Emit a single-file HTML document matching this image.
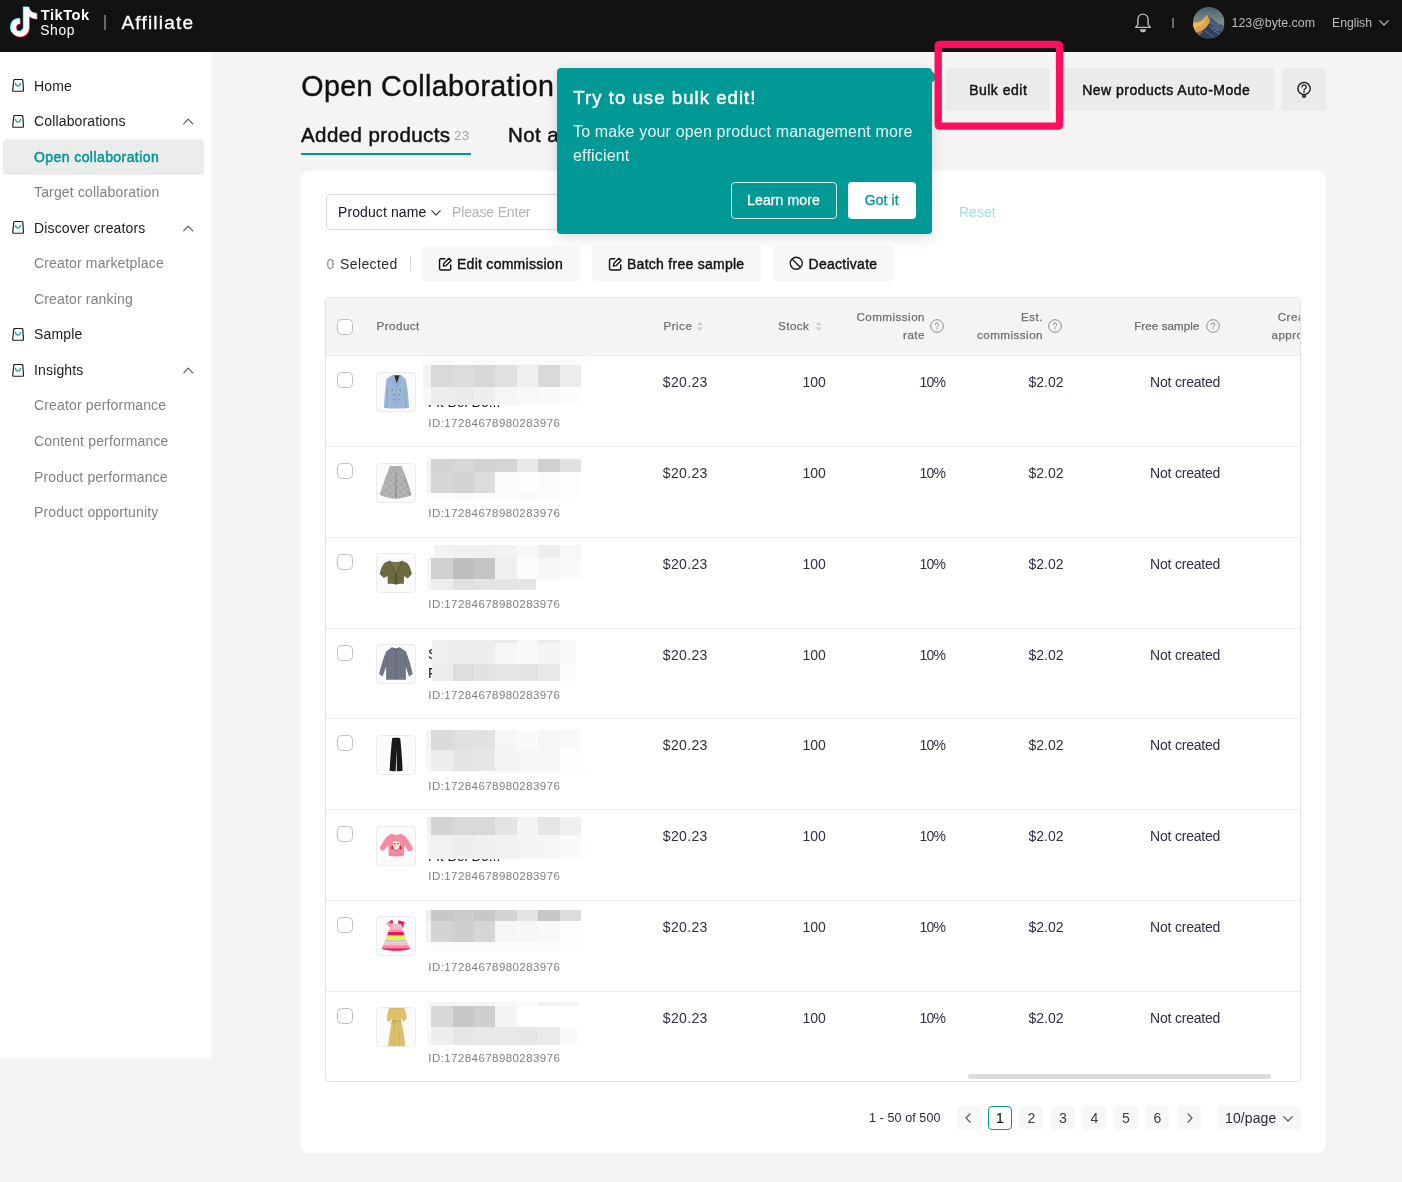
<!DOCTYPE html>
<html lang="en">
<head>
<meta charset="utf-8">
<title>Open Collaboration</title>
<style>
*{box-sizing:border-box;margin:0;padding:0}
html,body{width:1402px;height:1182px;overflow:hidden;background:#f4f4f4;font-family:"Liberation Sans",sans-serif;color:#161823}
svg{display:block;overflow:visible}
body{will-change:transform}
#hdr{position:absolute;left:0;top:0;width:1402px;height:51.700px;background:#121212}
#side{position:absolute;left:0;top:52px;width:211px;height:1006px;background:#fff;box-shadow:1px 0 0 #fafafa,0 1px 0 #f8f8f8}
.nav{position:absolute;left:34px;font-size:14px;line-height:20px;color:#1b1b20;white-space:nowrap;letter-spacing:0.150px}
.nav.sub{color:#828286;letter-spacing:0.160px}
.nav.act{color:#009995;letter-spacing:0.420px;-webkit-text-stroke:0.500px #009995}
.nico{position:absolute;left:12px;width:13px;height:13px}
.chev{position:absolute;left:182.700px;width:10.500px;height:6.600px}
#navact{position:absolute;left:3px;top:139px;width:201px;height:35.5px;background:#ececec;border-radius:4px}
h1{position:absolute;left:301.300px;top:68px;font-size:28.6px;line-height:36px;font-weight:normal;color:#121212;white-space:nowrap;letter-spacing:0.360px;-webkit-text-stroke:0.420px #121212}
.tab{position:absolute;top:122px;font-size:20.5px;line-height:26px;color:#121212;white-space:nowrap;-webkit-text-stroke:0.480px #121212;letter-spacing:0.420px}
#card{position:absolute;left:301.300px;top:170.800px;width:1024.700px;height:982.200px;background:#fff;border-radius:8px}
.btn{position:absolute;top:68px;height:42.700px;background:#ebebeb;border-radius:4px;font-size:14px;line-height:44px;color:#121212;text-align:center;white-space:nowrap;-webkit-text-stroke:0.450px #121212;letter-spacing:0.500px;padding-left:0.500px}
.abtn{position:absolute;top:246px;height:35px;background:#f7f7f7;border-radius:4px;font-size:14px;line-height:37px;color:#121212;white-space:nowrap;-webkit-text-stroke:0.420px #121212;letter-spacing:0.270px}
.abtn svg{position:absolute;top:10.600px;width:14.500px;height:14.500px}
#tbl{position:absolute;left:325px;top:297px;width:976px;height:785px;border:1px solid #e3e3e3;border-radius:4px;overflow:hidden;background:#fff}
#thead{position:absolute;left:0;top:0;width:976px;height:58.300px;background:#f4f4f4;border-bottom:1px solid #ececec}
.th{position:absolute;font-size:11.600px;line-height:17.600px;color:#6e6e72;white-space:nowrap;-webkit-text-stroke:0.250px #6e6e72;letter-spacing:0.480px}
.q{position:absolute;width:14px;height:14px}
.sort{position:absolute;width:7.600px;height:10.600px}
.row{position:absolute;left:0;width:974px;height:91.750px;border-bottom:1px solid #ececec}
.cb{position:absolute;left:10.500px;width:16px;height:16px;border:1px solid #c0c0c3;border-radius:4.500px;background:#fff}
.thumb{position:absolute;left:50.200px;top:16.500px;width:39.800px;height:40px;border:1px solid #ebebeb;border-radius:4px;background:#fbfbfb;overflow:hidden}
.thumb svg{position:absolute;left:-1px;top:-1px;width:40px;height:40px}
.pid{position:absolute;left:102.300px;top:59.300px;font-size:11.500px;line-height:16px;color:#7f8085;white-space:nowrap;letter-spacing:0.430px}
.cell{position:absolute;top:17px;font-size:14px;line-height:20px;color:#2f3040;white-space:nowrap}
.mz{position:absolute}
.pg{position:absolute;top:1106px;width:24px;height:24px;border-radius:4px;background:#f7f7f7;font-size:14px;line-height:24px;text-align:center;color:#3c3d45}
.peek{position:absolute;font-size:14px;line-height:19.300px;color:#161823;white-space:nowrap}
#tip{position:absolute;left:557px;top:68px;width:375px;height:166px;background:#009995;border-radius:4px;box-shadow:0 4px 14px rgba(0,0,0,0.130)}

</style>
</head>
<body>
<div id="hdr"></div>
<svg style="position:absolute;left:0;top:0;width:40px;height:40px" viewBox="0 0 40 40">
<path d="M25.60 6.40V26.90a6.5 6.5 0 1 1-6.5-6.5" fill="none" stroke="#25f4ee" stroke-width="5.500"/><path d="M28.35 6.40c0.300 3.600 3.200 6 7.700 6.300v5.700c-3 0-5.600-0.900-7.700-2.500z" fill="#25f4ee"/>
<path d="M27.10 7.60V28.10a6.5 6.5 0 1 1-6.5-6.5" fill="none" stroke="#fe2c55" stroke-width="5.500"/><path d="M29.85 7.60c0.300 3.600 3.200 6 7.700 6.300v5.700c-3 0-5.600-0.900-7.700-2.500z" fill="#fe2c55"/>
<path d="M26.35 7.00V27.50a6.5 6.5 0 1 1-6.5-6.5" fill="none" stroke="#fff" stroke-width="5.500"/><path d="M29.10 7.00c0.300 3.600 3.200 6 7.700 6.300v5.700c-3 0-5.600-0.900-7.700-2.500z" fill="#fff"/>
</svg>
<div style="position:absolute;left:40.800px;top:6.400px;font-size:14.700px;line-height:18px;font-weight:bold;color:#fff;letter-spacing:0.480px;white-space:nowrap" id="tiktok">TikTok</div>
<div style="position:absolute;left:40.300px;top:20.600px;font-size:13.900px;line-height:18px;color:#fff;letter-spacing:0.550px;white-space:nowrap" id="shop">Shop</div>
<div style="position:absolute;left:104.200px;top:15px;width:1.500px;height:15.200px;background:#696969"></div>
<div style="position:absolute;left:121.400px;top:10.700px;font-size:19px;line-height:24px;color:#fff;letter-spacing:1.200px;white-space:nowrap;-webkit-text-stroke:0.300px #fff" id="aff">Affiliate</div>
<svg style="position:absolute;left:1133px;top:12px;width:20px;height:22px" viewBox="0 0 20 22"><path d="M10 2.100c-3 0-5.100 2.300-5.100 5.200v5.300L2.600 15.400h14.800l-2.300-2.800V7.300c0-2.900-2.100-5.200-5.100-5.200z" fill="none" stroke="#bdbdbd" stroke-width="1.400" stroke-linejoin="round"/><path d="M6.900 17.200h6.200a3.100 3.100 0 0 1-6.200 0z" fill="#bdbdbd"/></svg>
<div style="position:absolute;left:1172px;top:17.500px;width:1.500px;height:10.500px;background:#6a6a6a"></div>
<svg style="position:absolute;left:1192.500px;top:6.900px;width:31.500px;height:31.500px" viewBox="0 0 32 32"><defs><clipPath id="av"><circle cx="16" cy="16" r="16"/></clipPath><linearGradient id="sky" x1="0" y1="0" x2="0" y2="1"><stop offset="0" stop-color="#48626f"/><stop offset="0.550" stop-color="#87938c"/><stop offset="1" stop-color="#87938c"/></linearGradient></defs><g clip-path="url(#av)"><rect width="32" height="32" fill="url(#sky)"/>
<path d="M14.100 7.800L16 9.500L17.500 10.800L19.800 11.200L21.500 13.500L23.500 15L25.300 16.400L26.500 15.600L28 17L30 18L32 19.500V32H8z" fill="#4b5c76"/>
<path d="M14.100 7.800L12.800 10L11 12L9 14L7 14.800L5 16L3 15.600L1.500 15.400L0 17V26L3 27L6 25.500L9 24.500L12 22L14.500 19.500L16.500 16.500L17.200 13.500L16 11z" fill="#e3a04a"/>
<path d="M14.100 7.800L13.500 11L12 14.500L10 17L7.500 18.500L5 19L3 21L0 22V17L1.500 15.400L3 15.600L5 16L7 14.800L9 14L11 12L12.800 10z" fill="#f0b45a"/>
<path d="M26.500 15.600L27.200 17.200L25.800 17.400z" fill="#e3a04a"/>
<path d="M0 26L3 27L6 25.500L9 24.500L12 22L14.500 19.500L16.500 16.500L18 18L20 19L22 21.500L25 23L28 25L32 26V32H0z" fill="#2f405c"/>
<path d="M0 26L3 27L6 25.500L9 24.500L10 26L7 28L4 30L0 31z" fill="#8a6a4a"/>
<path d="M17 19L19 22L22 24.500L25 26.500L28 28M20 20.500L23 22.500L26 24.500" stroke="#7f8ea6" stroke-width="0.900" fill="none"/>
<path d="M12 24L15 26L18 28.500L21 30.500" stroke="#5f7090" stroke-width="1" fill="none"/>
</g></svg>
<div style="position:absolute;left:1231.500px;top:14.800px;font-size:12.400px;line-height:16px;color:#bcbcbc;white-space:nowrap" id="email">123@byte.com</div>
<div style="position:absolute;left:1332px;top:14.800px;font-size:12.200px;line-height:16px;color:#bcbcbc;white-space:nowrap" id="lang">English</div>
<svg style="position:absolute;left:1379px;top:19.500px;width:10px;height:6px" viewBox="0 0 10 6"><path d="M0.700 0.700L5 5L9.300 0.700" fill="none" stroke="#b4b4b4" stroke-width="1.200" stroke-linecap="round" stroke-linejoin="round"/></svg>
<div id="side"></div>
<div id="navact"></div>
<svg class="nico" style="top:79.20px" viewBox="0 0 13 13"><path d="M2.700 0.500H9.900a0.900 0.900 0 0 1 0.900 0.850L11.500 11.300a0.900 0.900 0 0 1-0.900 0.950H1.600a0.900 0.900 0 0 1-0.900-0.950L1.800 1.350a0.900 0.900 0 0 1 0.900-0.850z" fill="none" stroke="#1d1e26" stroke-width="1.200" stroke-linejoin="round"/><path d="M3.500 4.300C3.700 6.300 4.800 7.150 6 7.150S8.300 6.300 8.500 4.300" fill="none" stroke="#14a09b" stroke-width="1.300" stroke-linecap="round"/></svg>
<div class="nav" style="top:75.50px">Home</div>
<svg class="nico" style="top:114.75px" viewBox="0 0 13 13"><path d="M2.700 0.500H9.900a0.900 0.900 0 0 1 0.900 0.850L11.500 11.300a0.900 0.900 0 0 1-0.900 0.950H1.600a0.900 0.900 0 0 1-0.900-0.950L1.800 1.350a0.900 0.900 0 0 1 0.900-0.850z" fill="none" stroke="#1d1e26" stroke-width="1.200" stroke-linejoin="round"/><path d="M3.500 4.300C3.700 6.300 4.800 7.150 6 7.150S8.300 6.300 8.500 4.300" fill="none" stroke="#14a09b" stroke-width="1.300" stroke-linecap="round"/></svg>
<svg class="chev" style="top:117.85px" viewBox="0 0 11 7"><path d="M0.7 6.2L5.5 1.2L10.3 6.2" fill="none" stroke="#55565c" stroke-width="1.2" stroke-linecap="round" stroke-linejoin="round"/></svg>
<div class="nav" style="top:111.05px">Collaborations</div>
<div class="nav act" style="top:146.60px">Open collaboration</div>
<div class="nav sub" style="top:182.15px">Target collaboration</div>
<svg class="nico" style="top:221.40px" viewBox="0 0 13 13"><path d="M2.700 0.500H9.900a0.900 0.900 0 0 1 0.900 0.850L11.500 11.300a0.900 0.900 0 0 1-0.900 0.950H1.600a0.900 0.900 0 0 1-0.900-0.950L1.800 1.350a0.900 0.900 0 0 1 0.900-0.850z" fill="none" stroke="#1d1e26" stroke-width="1.200" stroke-linejoin="round"/><path d="M3.500 4.300C3.700 6.300 4.800 7.150 6 7.150S8.300 6.300 8.500 4.300" fill="none" stroke="#14a09b" stroke-width="1.300" stroke-linecap="round"/></svg>
<svg class="chev" style="top:224.50px" viewBox="0 0 11 7"><path d="M0.7 6.2L5.5 1.2L10.3 6.2" fill="none" stroke="#55565c" stroke-width="1.2" stroke-linecap="round" stroke-linejoin="round"/></svg>
<div class="nav" style="top:217.70px">Discover creators</div>
<div class="nav sub" style="top:253.25px">Creator marketplace</div>
<div class="nav sub" style="top:288.80px">Creator ranking</div>
<svg class="nico" style="top:328.05px" viewBox="0 0 13 13"><path d="M2.700 0.500H9.900a0.900 0.900 0 0 1 0.900 0.850L11.500 11.300a0.900 0.900 0 0 1-0.900 0.950H1.600a0.900 0.900 0 0 1-0.900-0.950L1.800 1.350a0.900 0.900 0 0 1 0.900-0.850z" fill="none" stroke="#1d1e26" stroke-width="1.200" stroke-linejoin="round"/><path d="M3.500 4.300C3.700 6.300 4.800 7.150 6 7.150S8.300 6.300 8.500 4.300" fill="none" stroke="#14a09b" stroke-width="1.300" stroke-linecap="round"/></svg>
<div class="nav" style="top:324.35px">Sample</div>
<svg class="nico" style="top:363.60px" viewBox="0 0 13 13"><path d="M2.700 0.500H9.900a0.900 0.900 0 0 1 0.900 0.850L11.500 11.300a0.900 0.900 0 0 1-0.900 0.950H1.600a0.900 0.900 0 0 1-0.900-0.950L1.800 1.350a0.900 0.900 0 0 1 0.900-0.850z" fill="none" stroke="#1d1e26" stroke-width="1.200" stroke-linejoin="round"/><path d="M3.500 4.300C3.700 6.300 4.800 7.150 6 7.150S8.300 6.300 8.500 4.300" fill="none" stroke="#14a09b" stroke-width="1.300" stroke-linecap="round"/></svg>
<svg class="chev" style="top:366.70px" viewBox="0 0 11 7"><path d="M0.7 6.2L5.5 1.2L10.3 6.2" fill="none" stroke="#55565c" stroke-width="1.2" stroke-linecap="round" stroke-linejoin="round"/></svg>
<div class="nav" style="top:359.90px">Insights</div>
<div class="nav sub" style="top:395.45px">Creator performance</div>
<div class="nav sub" style="top:431.00px">Content performance</div>
<div class="nav sub" style="top:466.55px">Product performance</div>
<div class="nav sub" style="top:502.10px">Product opportunity</div>
<h1 id="h1">Open Collaboration</h1>
<div class="tab" style="left:301px" id="tab1">Added products<span style="font-size:13.500px;color:#a4a5a9;-webkit-text-stroke:0;margin-left:3.500px;letter-spacing:0.300px;position:relative;top:-2.300px">23</span></div>
<div style="position:absolute;left:301px;top:152.500px;width:170px;height:2.500px;background:#009995"></div>
<div class="tab" style="left:508px" id="tab2">Not added products</div>
<div class="btn" style="left:945.700px;width:104.600px" id="bulk">Bulk edit</div>
<div class="btn" style="left:1058px;width:216px" id="npam">New products Auto-Mode</div>
<div class="btn" style="left:1282px;width:44px"></div>
<svg style="position:absolute;left:1294px;top:78px;width:20px;height:20px" viewBox="0 0 20 20"><circle cx="10.050" cy="10.500" r="6.150" fill="none" stroke="#1a1a1a" stroke-width="1.400"/><path d="M7.950 8.900a2.150 2.050 0 1 1 3.200 1.800c-0.800 0.420-1.080 0.800-1.080 1.400" fill="none" stroke="#1a1a1a" stroke-width="1.250" stroke-linecap="round"/><circle cx="10.050" cy="13.900" r="0.850" fill="#1a1a1a"/><path d="M7.300 15.800L8.100 17.200V19.800H12.050V17.200L12.800 15.800L10.050 17.300z" fill="#3c3c3c"/></svg>
<div id="card"></div>
<div style="position:absolute;left:326px;top:194px;width:400px;height:36px;border:1px solid #dcdcdc;border-radius:4px;background:#fff"></div>
<div style="position:absolute;left:338px;top:202px;font-size:14px;line-height:20px;color:#161823;white-space:nowrap;letter-spacing:0.1px" id="pname">Product name</div>
<svg style="position:absolute;left:431px;top:209.500px;width:10px;height:6px" viewBox="0 0 10 6"><path d="M0.700 0.700L5 5L9.300 0.700" fill="none" stroke="#444" stroke-width="1.200" stroke-linecap="round" stroke-linejoin="round"/></svg>
<div style="position:absolute;left:452px;top:202px;font-size:14px;line-height:20px;color:#b2b3b7;white-space:nowrap;letter-spacing:-0.150px" id="pe">Please Enter</div>
<div style="position:absolute;left:738px;top:194px;width:76px;height:36px;border-radius:4px;background:#009995;color:#fff;font-size:14px;line-height:36px;text-align:center" id="search">Search</div>
<div style="position:absolute;left:959px;top:202px;font-size:14px;line-height:20px;color:#a6dedd;white-space:nowrap" id="reset">Reset</div>
<div style="position:absolute;left:326.600px;top:253.500px;font-size:14px;line-height:20px;color:#8a8b91;white-space:nowrap">0</div>
<div style="position:absolute;left:340px;top:253.500px;font-size:14px;line-height:20px;color:#2a2b36;white-space:nowrap;letter-spacing:0.400px" id="sel">Selected</div>
<div style="position:absolute;left:409.500px;top:256px;width:1.500px;height:15px;background:#d8d8d8"></div>
<div class="abtn" style="left:422px;width:157.500px;padding-left:35px" id="ab1"><svg style="left:16.2px" viewBox="0 0 14 14"><path d="M6.500 1.700H3a1.500 1.500 0 0 0-1.500 1.500v7.800A1.500 1.500 0 0 0 3 12.500h7.800a1.500 1.500 0 0 0 1.500-1.500V7.800" fill="none" stroke="#121212" stroke-width="1.400" stroke-linecap="round"/><path d="M10.600 1.300l2.100 2.100-5 5-2.500 0.400 0.400-2.500z" fill="none" stroke="#121212" stroke-width="1.300" stroke-linejoin="round"/></svg>Edit commission</div>
<div class="abtn" style="left:592px;width:168.500px;padding-left:35px" id="ab2"><svg style="left:16.2px" viewBox="0 0 14 14"><path d="M6.500 1.700H3a1.500 1.500 0 0 0-1.500 1.500v7.800A1.500 1.500 0 0 0 3 12.500h7.800a1.500 1.500 0 0 0 1.500-1.500V7.800" fill="none" stroke="#121212" stroke-width="1.400" stroke-linecap="round"/><path d="M10.600 1.300l2.100 2.100-5 5-2.500 0.400 0.400-2.500z" fill="none" stroke="#121212" stroke-width="1.300" stroke-linejoin="round"/></svg>Batch free sample</div>
<div class="abtn" style="left:773px;width:121px;padding-left:35.500px" id="ab3"><svg style="left:16.300px;top:9.700px" viewBox="0 0 14 14"><circle cx="7" cy="7" r="5.800" fill="none" stroke="#121212" stroke-width="1.250"/><path d="M2.900 2.900L11.100 11.100" stroke="#121212" stroke-width="1.250"/></svg>Deactivate</div>
<div id="tbl">
<div id="thead"></div>
<div class="cb" style="top:20.69999999999999px"></div>
<div class="th" id="thp" style="left:50.5px;top:19.0px">Product</div>
<div class="th" id="thpr" style="left:337.5px;top:19.0px">Price</div>
<svg class="sort" style="left:369.79999999999995px;top:22.69999999999999px" viewBox="0 0 7 10"><path d="M3.500 0.500L6.300 4H0.700z" fill="#cfcfd1"/><path d="M3.500 9.500L6.300 6H0.700z" fill="#cfcfd1"/></svg>
<div class="th" id="thst" style="left:452px;top:19.0px">Stock</div>
<svg class="sort" style="left:488.5px;top:22.69999999999999px" viewBox="0 0 7 10"><path d="M3.500 0.500L6.300 4H0.700z" fill="#cfcfd1"/><path d="M3.500 9.500L6.300 6H0.700z" fill="#cfcfd1"/></svg>
<div class="th" id="thc" style="right:375px;text-align:right;top:10.399999999999977px">Commission<br>rate</div>
<svg class="q" style="left:604px;top:21.100000000000023px" viewBox="0 0 14 14"><circle cx="7" cy="7" r="6.300" fill="none" stroke="#8c8d92" stroke-width="1"/><path d="M5.300 5.700a1.700 1.700 0 1 1 2.500 1.500c-0.600 0.300-0.800 0.600-0.800 1.100" fill="none" stroke="#8c8d92" stroke-width="1" stroke-linecap="round"/><circle cx="7" cy="10" r="0.650" fill="#8c8d92"/></svg>
<div class="th" id="the" style="right:257px;text-align:right;top:10.399999999999977px">Est.<br>commission</div>
<svg class="q" style="left:722px;top:21.100000000000023px" viewBox="0 0 14 14"><circle cx="7" cy="7" r="6.300" fill="none" stroke="#8c8d92" stroke-width="1"/><path d="M5.300 5.700a1.700 1.700 0 1 1 2.500 1.500c-0.600 0.300-0.800 0.600-0.800 1.100" fill="none" stroke="#8c8d92" stroke-width="1" stroke-linecap="round"/><circle cx="7" cy="10" r="0.650" fill="#8c8d92"/></svg>
<div class="th" id="thf" style="left:808.2px;top:19.0px"><span style="letter-spacing:0.080px">Free sample</span></div>
<svg class="q" style="left:880px;top:21.100000000000023px" viewBox="0 0 14 14"><circle cx="7" cy="7" r="6.300" fill="none" stroke="#8c8d92" stroke-width="1"/><path d="M5.300 5.700a1.700 1.700 0 1 1 2.500 1.500c-0.600 0.300-0.800 0.600-0.800 1.100" fill="none" stroke="#8c8d92" stroke-width="1" stroke-linecap="round"/><circle cx="7" cy="10" r="0.650" fill="#8c8d92"/></svg>
<div class="th" id="thcr" style="right:-19.799999999999955px;text-align:right;top:10.399999999999977px">Creator<br>approval</div>
<div class="row" style="top:57.30px">
<div class="cb" style="top:17.200px"></div>
<div class="thumb"><svg viewBox="0 0 40 40"><path d="M17.2 2.600L13.500 4.800L10.800 6.800C9.500 12 8.600 24 7.900 35.600L11.500 36L11.800 36.500H28.600L29 36L33 35.600C32.300 24 31.200 12 29.500 6.800L26.800 4.800L24.200 2.600L20.700 11.700z" fill="#9bb7d7"/><path d="M18 3.200L24 3.200L20.700 11.900z" fill="#2d3038"/><path d="M17.200 2.600L15.300 7.500L16.500 8.400L15.700 9.400L20.700 16.500L20.700 11.700zM24.200 2.600L25.800 7.500L24.600 8.400L25.400 9.400L20.700 16.500L20.700 11.700z" fill="#8fafd3"/><path d="M20.700 16.500L19.600 36.500" stroke="#86a6cb" stroke-width="0.800"/><path d="M11.700 14L11 36M29 14L29.700 36" stroke="#86a6cb" stroke-width="0.900" fill="none"/><g fill="#6d7078"><circle cx="16.300" cy="18" r="0.700"/><circle cx="24.200" cy="18" r="0.700"/><circle cx="17.800" cy="22.700" r="0.700"/><circle cx="22.900" cy="22.700" r="0.700"/><circle cx="17.800" cy="27.700" r="0.700"/><circle cx="22.900" cy="27.700" r="0.700"/></g><path d="M7.900 35L11.300 35.400V36.200L7.900 35.800zM33 35L29.600 35.400V36.200L33 35.800z" fill="#b89a80"/></svg></div>
<div class="pid">ID:17284678980283976</div>
<div class="cell" style="left:336.79999999999995px;letter-spacing:0.350px">$20.23</div>
<div class="cell" style="right:474.20000000000005px">100</div>
<div class="cell" style="right:354.70000000000005px;letter-spacing:-0.700px">10%</div>
<div class="cell" style="right:236.5px">$2.02</div>
<div class="cell" style="left:824px;letter-spacing:-0.2px">Not created</div>
</div>
<div class="row" style="top:148.05px">
<div class="cb" style="top:17.200px"></div>
<div class="thumb"><svg viewBox="0 0 40 40"><defs><pattern id="ck" width="1.600" height="1.600" patternUnits="userSpaceOnUse" patternTransform="rotate(35)"><rect width="1.600" height="1.600" fill="#bcbcbc"/><rect width="0.800" height="0.800" fill="#a4a4a4"/><rect x="0.800" y="0.800" width="0.800" height="0.800" fill="#a4a4a4"/></pattern></defs><path d="M13.900 3.300H25.500L27.300 8C31 17 33.500 25 35.600 31.700C33.500 33.300 31 34 28.500 34.300C26 35.300 22.500 35.800 19.600 35.600C16 35.800 13 35 10.500 34C8 33.500 5.500 32.800 3.700 31.700C6.500 23 9.500 14 12.300 7.500z" fill="url(#ck)"/><path d="M13.900 3.300H25.500L25.900 4.600H13.500z" fill="#a8a8a8"/><path d="M19.400 8.800L19 35.600L20.600 35.500L20.200 8.800z" fill="#8c8c8c"/><path d="M27.300 8C31 17 33.500 25 35.600 31.700L33 33C31 25 29.500 17 26.500 8z" fill="#a2a2a2" opacity="0.600"/></svg></div>
<div class="pid">ID:17284678980283976</div>
<div class="cell" style="left:336.79999999999995px;letter-spacing:0.350px">$20.23</div>
<div class="cell" style="right:474.20000000000005px">100</div>
<div class="cell" style="right:354.70000000000005px;letter-spacing:-0.700px">10%</div>
<div class="cell" style="right:236.5px">$2.02</div>
<div class="cell" style="left:824px;letter-spacing:-0.2px">Not created</div>
</div>
<div class="row" style="top:238.80px">
<div class="cb" style="top:17.200px"></div>
<div class="thumb"><svg viewBox="0 0 40 40"><path d="M13.200 7.700L8.400 10.100C6 12.500 4.500 17 3.700 21.100L7.900 25L11.400 22.900L11.900 31.200C15 30.600 17.500 30.800 19.800 31.600C22 30.800 25 30.600 27.700 31.200L28.200 22.900L31.700 25.500L35.900 21.100C35 17 33.500 12.500 31.200 10.100L26.200 7.700L19.800 21.100z" fill="#6c6b40"/><path d="M13.200 7.700L19.800 21.100L26.200 7.700C22 9.300 17.500 9.300 13.200 7.700z" fill="#77764a"/><path d="M13.200 7.700L19.800 21.100L26.200 7.700" stroke="#4e4d2a" stroke-width="0.900" fill="none"/><path d="M19.800 21.100L19.500 24L20.300 27L19.800 31.400" stroke="#45441f" stroke-width="1.100" fill="none"/><path d="M19.800 21.100L23 25.500M19.800 23L17 26" stroke="#55542c" stroke-width="0.700" fill="none"/></svg></div>
<div class="pid">ID:17284678980283976</div>
<div class="cell" style="left:336.79999999999995px;letter-spacing:0.350px">$20.23</div>
<div class="cell" style="right:474.20000000000005px">100</div>
<div class="cell" style="right:354.70000000000005px;letter-spacing:-0.700px">10%</div>
<div class="cell" style="right:236.5px">$2.02</div>
<div class="cell" style="left:824px;letter-spacing:-0.2px">Not created</div>
</div>
<div class="row" style="top:329.55px">
<div class="cb" style="top:17.200px"></div>
<div class="thumb"><svg viewBox="0 0 40 40"><defs><pattern id="sp" width="1.400" height="1.400" patternUnits="userSpaceOnUse"><rect width="1.400" height="1.400" fill="#7b808d"/><rect width="0.700" height="0.700" fill="#62677a"/><rect x="0.700" y="0.700" width="0.700" height="0.700" fill="#6a6f7e"/></pattern></defs><path d="M15.800 3.200L10.100 7.600C7.500 14 5 22 3.100 30L6.600 32.600L10.100 23V35.700H29.900V23L33 32.600L36.700 30C35 22 32.500 14 29.900 7.600L23.800 3.200L19.800 5z" fill="url(#sp)"/><path d="M15.800 3.200L19.800 7.500L23.800 3.200L19.800 4.700z" fill="#5a5f6d"/><path d="M19.800 7.500V35.700" stroke="#5e6373" stroke-width="0.700"/><path d="M10.100 23L11.300 12M29.900 23L28.700 12" stroke="#666b7a" stroke-width="0.600"/></svg></div>
<div class="pid">ID:17284678980283976</div>
<div class="cell" style="left:336.79999999999995px;letter-spacing:0.350px">$20.23</div>
<div class="cell" style="right:474.20000000000005px">100</div>
<div class="cell" style="right:354.70000000000005px;letter-spacing:-0.700px">10%</div>
<div class="cell" style="right:236.5px">$2.02</div>
<div class="cell" style="left:824px;letter-spacing:-0.2px">Not created</div>
</div>
<div class="row" style="top:420.30px">
<div class="cb" style="top:17.200px"></div>
<div class="thumb"><svg viewBox="0 0 40 40"><path d="M16.100 3.300C18.500 2.700 21.800 2.700 24.200 3.300C25.300 13 26.200 25 26.600 35.800C24.800 36.400 22.600 36.400 20.900 35.900L20.300 13.300L19.800 35.900C17.800 36.400 15.400 36.400 13.600 35.800C14.200 25 15 13 16.100 3.300z" fill="#191919"/></svg></div>
<div class="pid">ID:17284678980283976</div>
<div class="cell" style="left:336.79999999999995px;letter-spacing:0.350px">$20.23</div>
<div class="cell" style="right:474.20000000000005px">100</div>
<div class="cell" style="right:354.70000000000005px;letter-spacing:-0.700px">10%</div>
<div class="cell" style="right:236.5px">$2.02</div>
<div class="cell" style="left:824px;letter-spacing:-0.2px">Not created</div>
</div>
<div class="row" style="top:511.05px">
<div class="cb" style="top:17.200px"></div>
<div class="thumb"><svg viewBox="0 0 40 40"><path d="M15.800 7.700L12.300 9.500C8.500 13 5.500 18 3.700 22.200L5.700 24.400L7.500 24.800L12.300 19.600L12.800 29.700C17 30.600 23 30.600 27.700 29.700L28.600 19.600L32.300 25.300L34.300 25.300L37 23.100C35 18 32 13 28.200 9.500L24.600 7.700C22 9.300 18.500 9.300 15.800 7.700z" fill="#f18ca3"/><path d="M16.500 8.500C18.500 9.700 22 9.700 24 8.500" stroke="#f0a03a" stroke-width="0.600" fill="none"/><path d="M12.800 28.300C17 29.200 23 29.200 27.700 28.300" stroke="#ec7893" stroke-width="0.700" fill="none"/><ellipse cx="20.300" cy="19.300" rx="3.300" ry="4.100" fill="#f9c9d3"/><ellipse cx="18.700" cy="17.500" rx="1.800" ry="1.900" fill="#fff"/><ellipse cx="22" cy="17.500" rx="1.800" ry="1.900" fill="#fff"/><circle cx="18.900" cy="17.700" r="0.800" fill="#3a2a2a"/><circle cx="21.900" cy="17.700" r="0.800" fill="#3a2a2a"/><path d="M19.600 18.500h1.400l-0.700 1.300z" fill="#f5c400"/><ellipse cx="20.400" cy="21.800" rx="1.900" ry="1.400" fill="#fff"/><path d="M16.600 19.600C15 20.500 14.800 22.500 15.600 23.600L17.600 23.200zM24 19.600C25.600 20.500 25.900 22.500 25.300 23.600L23.300 23.200z" fill="#e01b22"/><path d="M17.200 13.200l0.600 1.300M23.300 13.200l-0.600 1.300" stroke="#f0a03a" stroke-width="0.600"/><path d="M19.200 24.200v0.900M21.500 24.200v0.900" stroke="#5a3a3a" stroke-width="0.600"/></svg></div>
<div class="pid">ID:17284678980283976</div>
<div class="cell" style="left:336.79999999999995px;letter-spacing:0.350px">$20.23</div>
<div class="cell" style="right:474.20000000000005px">100</div>
<div class="cell" style="right:354.70000000000005px;letter-spacing:-0.700px">10%</div>
<div class="cell" style="right:236.5px">$2.02</div>
<div class="cell" style="left:824px;letter-spacing:-0.2px">Not created</div>
</div>
<div class="row" style="top:601.80px">
<div class="cb" style="top:17.200px"></div>
<div class="thumb"><svg viewBox="0 0 40 40"><path d="M10.100 7.300L16.300 3.700L17.600 8.100L14.500 12.500z" fill="#f799b0"/><path d="M13 5.600L16.300 3.700L17.300 7L15 7.800z" fill="#ee2a63"/><path d="M22 4.200L28.600 5.900L26.400 12.100L25 8.100L22.300 8.100z" fill="#ee1a5a"/><path d="M15 8.100H25.100V10.300H15z" fill="#bcd0cc"/><path d="M15 10.300H25.100L26.400 13.400H13.200z" fill="#f9b3c4"/><path d="M13.200 13.400H26.400L27.300 16.100H12.300z" fill="#f68fa9"/><path d="M12.300 16.100H27.300L28.700 19.600H10.900z" fill="#ee1a55"/><path d="M10.900 19.600H28.700L30.200 23.500H9.400z" fill="#e6f254"/><path d="M9.400 23.500H30.200L31.300 26.200H8.300z" fill="#b9d5cd"/><path d="M8.300 26.200H31.300L32.600 29.300H7.100z" fill="#f9bccb"/><path d="M7.100 29.300H32.600L33.900 32.300H5.900z" fill="#f68aa6"/><path d="M5.900 32.300H33.900L34 33C28 35.400 12 35.400 5.800 33z" fill="#ee1a5a"/></svg></div>
<div class="pid">ID:17284678980283976</div>
<div class="cell" style="left:336.79999999999995px;letter-spacing:0.350px">$20.23</div>
<div class="cell" style="right:474.20000000000005px">100</div>
<div class="cell" style="right:354.70000000000005px;letter-spacing:-0.700px">10%</div>
<div class="cell" style="right:236.5px">$2.02</div>
<div class="cell" style="left:824px;letter-spacing:-0.2px">Not created</div>
</div>
<div class="row" style="top:692.55px">
<div class="cb" style="top:17.200px"></div>
<div class="thumb"><svg viewBox="0 0 40 40"><path d="M15.400 0L12.800 1.700C11.800 5 11.100 9.500 10.800 13.500L14.500 14.900L16 10.500L16.300 12.700C14.500 21 13 31 11.900 40H29.500C28.500 31 27 21 25.100 13.500L25.500 10.500L27.300 14.900L30.800 11.800C30.300 8 29.600 4.500 28.600 1.700L24.600 0C22 2.200 18 2.200 15.400 0z" fill="#dcc06a"/><path d="M15.400 0C18 2.600 22 2.600 24.600 0" stroke="#b59a4a" stroke-width="0.800" fill="none"/><path d="M16.300 12.700L25.100 13.500L25.300 15.200L16.100 14.600z" fill="#cfb057"/><path d="M18.400 13.500L19.600 13.600L19 22.800L18 22.600z" fill="#c9a94e"/><path d="M18.400 14L14.500 16.600L15.800 17.800L18.600 15.500z" fill="#d2b45c"/><path d="M18.500 22.800L17.800 40M22.500 15L23.500 40" stroke="#cdb05a" stroke-width="0.600" fill="none"/></svg></div>
<div class="pid">ID:17284678980283976</div>
<div class="cell" style="left:336.79999999999995px;letter-spacing:0.350px">$20.23</div>
<div class="cell" style="right:474.20000000000005px">100</div>
<div class="cell" style="right:354.70000000000005px;letter-spacing:-0.700px">10%</div>
<div class="cell" style="right:236.5px">$2.02</div>
<div class="cell" style="left:824px;letter-spacing:-0.2px">Not created</div>
</div>
<div class="peek" style="left:102px;top:95.10000000000002px">Fit Bel Bo...</div>
<div class="peek" style="left:102px;top:548.8px">Fit Bel Bo...</div>
<div class="peek" style="left:102px;top:346.5px">Slim<br>Fit</div>
<i class="mz" style="left:97.2px;top:61.3px;width:164.8px;height:5.6px;background:#fbfbfb"></i>
<i class="mz" style="left:97.2px;top:66.9px;width:7.7px;height:22.1px;background:#f3f3f3"></i>
<i class="mz" style="left:104.9px;top:66.9px;width:22.3px;height:22.1px;background:#d9d9d9"></i>
<i class="mz" style="left:127.2px;top:66.9px;width:20.5px;height:22.1px;background:#dcdcdc"></i>
<i class="mz" style="left:147.7px;top:66.9px;width:21.4px;height:22.1px;background:#d8d8d8"></i>
<i class="mz" style="left:169.1px;top:66.9px;width:21.9px;height:22.1px;background:#e0e0e0"></i>
<i class="mz" style="left:191.0px;top:66.9px;width:20.9px;height:22.1px;background:#f0f0f0"></i>
<i class="mz" style="left:211.9px;top:66.9px;width:21.9px;height:22.1px;background:#d9d9d9"></i>
<i class="mz" style="left:233.8px;top:66.9px;width:21.2px;height:22.1px;background:#ececec"></i>
<i class="mz" style="left:97.2px;top:89.0px;width:7.7px;height:17.8px;background:#f8f8f8"></i>
<i class="mz" style="left:104.9px;top:89.0px;width:22.3px;height:17.8px;background:#ececec"></i>
<i class="mz" style="left:127.2px;top:89.0px;width:20.5px;height:17.8px;background:#eaeaea"></i>
<i class="mz" style="left:147.7px;top:89.0px;width:21.4px;height:17.8px;background:#eeeeee"></i>
<i class="mz" style="left:169.1px;top:89.0px;width:21.9px;height:17.8px;background:#f6f6f6"></i>
<i class="mz" style="left:191.0px;top:89.0px;width:20.9px;height:17.8px;background:#f9f9f9"></i>
<i class="mz" style="left:211.9px;top:89.0px;width:21.9px;height:17.8px;background:#fafafa"></i>
<i class="mz" style="left:233.8px;top:89.0px;width:21.2px;height:17.8px;background:#fcfcfc"></i>
<i class="mz" style="left:101.0px;top:160.8px;width:3.9px;height:12.9px;background:#f3f3f3"></i>
<i class="mz" style="left:104.9px;top:160.8px;width:22.3px;height:12.9px;background:#d4d4d4"></i>
<i class="mz" style="left:127.2px;top:160.8px;width:20.5px;height:12.9px;background:#d7d7d7"></i>
<i class="mz" style="left:147.7px;top:160.8px;width:21.4px;height:12.9px;background:#d2d2d2"></i>
<i class="mz" style="left:169.1px;top:160.8px;width:21.9px;height:12.9px;background:#d5d5d5"></i>
<i class="mz" style="left:191.0px;top:160.8px;width:20.9px;height:12.9px;background:#e8e8e8"></i>
<i class="mz" style="left:211.9px;top:160.8px;width:21.9px;height:12.9px;background:#d0d0d0"></i>
<i class="mz" style="left:233.8px;top:160.8px;width:21.2px;height:12.9px;background:#e2e2e2"></i>
<i class="mz" style="left:101.0px;top:173.7px;width:3.9px;height:21.0px;background:#f5f5f5"></i>
<i class="mz" style="left:104.9px;top:173.7px;width:22.3px;height:21.0px;background:#d6d6d6"></i>
<i class="mz" style="left:127.2px;top:173.7px;width:20.5px;height:21.0px;background:#d3d3d3"></i>
<i class="mz" style="left:147.7px;top:173.7px;width:21.4px;height:21.0px;background:#dcdcdc"></i>
<i class="mz" style="left:169.1px;top:173.7px;width:21.9px;height:21.0px;background:#fbfbfb"></i>
<i class="mz" style="left:191.0px;top:173.7px;width:20.9px;height:21.0px;background:#fdfdfd"></i>
<i class="mz" style="left:211.9px;top:173.7px;width:21.9px;height:21.0px;background:#fcfcfc"></i>
<i class="mz" style="left:233.8px;top:173.7px;width:21.2px;height:21.0px;background:#fefefe"></i>
<i class="mz" style="left:101.0px;top:194.7px;width:3.9px;height:7.6px;background:#fcfcfc"></i>
<i class="mz" style="left:104.9px;top:194.7px;width:22.3px;height:7.6px;background:#fbfbfb"></i>
<i class="mz" style="left:127.2px;top:194.7px;width:20.5px;height:7.6px;background:#fafafa"></i>
<i class="mz" style="left:147.7px;top:194.7px;width:21.4px;height:7.6px;background:#fbfbfb"></i>
<i class="mz" style="left:169.1px;top:194.7px;width:21.9px;height:7.6px;background:#fbfbfb"></i>
<i class="mz" style="left:191.0px;top:194.7px;width:20.9px;height:7.6px;background:#fafafa"></i>
<i class="mz" style="left:211.9px;top:194.7px;width:21.9px;height:7.6px;background:#fbfbfb"></i>
<i class="mz" style="left:233.8px;top:194.7px;width:21.2px;height:7.6px;background:#fefefe"></i>
<i class="mz" style="left:108.0px;top:246.7px;width:19.2px;height:13.2px;background:#f3f3f3"></i>
<i class="mz" style="left:127.2px;top:246.7px;width:20.5px;height:13.2px;background:#f1f1f1"></i>
<i class="mz" style="left:147.7px;top:246.7px;width:21.4px;height:13.2px;background:#f0f0f0"></i>
<i class="mz" style="left:169.1px;top:246.7px;width:21.9px;height:13.2px;background:#f3f3f3"></i>
<i class="mz" style="left:191.0px;top:246.7px;width:20.9px;height:13.2px;background:#f8f8f8"></i>
<i class="mz" style="left:211.9px;top:246.7px;width:21.9px;height:13.2px;background:#eeeeee"></i>
<i class="mz" style="left:233.8px;top:246.7px;width:21.2px;height:13.2px;background:#f7f7f7"></i>
<i class="mz" style="left:102.0px;top:255.5px;width:6.0px;height:4.4px;background:#f8f8f8"></i>
<i class="mz" style="left:101.0px;top:259.9px;width:3.9px;height:20.7px;background:#f6f6f6"></i>
<i class="mz" style="left:104.9px;top:259.9px;width:22.3px;height:20.7px;background:#d0d0d0"></i>
<i class="mz" style="left:127.2px;top:259.9px;width:20.5px;height:20.7px;background:#bebebe"></i>
<i class="mz" style="left:147.7px;top:259.9px;width:21.4px;height:20.7px;background:#c4c4c4"></i>
<i class="mz" style="left:169.1px;top:259.9px;width:21.9px;height:20.7px;background:#efefef"></i>
<i class="mz" style="left:191.0px;top:259.9px;width:20.9px;height:20.7px;background:#fcfcfc"></i>
<i class="mz" style="left:211.9px;top:259.9px;width:21.9px;height:20.7px;background:#f7f7f7"></i>
<i class="mz" style="left:233.8px;top:259.9px;width:21.2px;height:20.7px;background:#f9f9f9"></i>
<i class="mz" style="left:101.0px;top:280.6px;width:3.9px;height:11.2px;background:#f8f8f8"></i>
<i class="mz" style="left:104.9px;top:280.6px;width:22.3px;height:11.2px;background:#ececec"></i>
<i class="mz" style="left:127.2px;top:280.6px;width:20.5px;height:11.2px;background:#e0e0e0"></i>
<i class="mz" style="left:147.7px;top:280.6px;width:21.4px;height:11.2px;background:#e3e3e3"></i>
<i class="mz" style="left:169.1px;top:280.6px;width:21.9px;height:11.2px;background:#e4e4e4"></i>
<i class="mz" style="left:191.0px;top:280.6px;width:18.9px;height:11.2px;background:#e6e6e6"></i>
<i class="mz" style="left:106.1px;top:342.0px;width:21.1px;height:24.0px;background:#efefef"></i>
<i class="mz" style="left:127.2px;top:342.0px;width:20.5px;height:24.0px;background:#ececec"></i>
<i class="mz" style="left:147.7px;top:342.0px;width:21.4px;height:24.0px;background:#eeeeee"></i>
<i class="mz" style="left:169.1px;top:342.0px;width:21.9px;height:24.0px;background:#f6f6f6"></i>
<i class="mz" style="left:191.0px;top:342.0px;width:20.9px;height:24.0px;background:#fafafa"></i>
<i class="mz" style="left:211.9px;top:342.0px;width:21.9px;height:24.0px;background:#f5f5f5"></i>
<i class="mz" style="left:233.8px;top:342.0px;width:16.2px;height:24.0px;background:#fafafa"></i>
<i class="mz" style="left:169.1px;top:342.0px;width:21.9px;height:2.5px;background:#e8e8e8"></i>
<i class="mz" style="left:211.9px;top:342.0px;width:21.9px;height:2.5px;background:#ececec"></i>
<i class="mz" style="left:106.1px;top:366.0px;width:21.1px;height:16.8px;background:#ededed"></i>
<i class="mz" style="left:127.2px;top:366.0px;width:20.5px;height:16.8px;background:#dedede"></i>
<i class="mz" style="left:147.7px;top:366.0px;width:21.4px;height:16.8px;background:#e2e2e2"></i>
<i class="mz" style="left:169.1px;top:366.0px;width:21.9px;height:16.8px;background:#e6e6e6"></i>
<i class="mz" style="left:191.0px;top:366.0px;width:20.9px;height:16.8px;background:#e4e4e4"></i>
<i class="mz" style="left:211.9px;top:366.0px;width:21.9px;height:16.8px;background:#e8e8e8"></i>
<i class="mz" style="left:233.8px;top:366.0px;width:16.2px;height:16.8px;background:#fcfcfc"></i>
<i class="mz" style="left:100.3px;top:432.1px;width:4.6px;height:19.7px;background:#f4f4f4"></i>
<i class="mz" style="left:104.9px;top:432.1px;width:22.3px;height:19.7px;background:#dbdbdb"></i>
<i class="mz" style="left:127.2px;top:432.1px;width:20.5px;height:19.7px;background:#e0e0e0"></i>
<i class="mz" style="left:147.7px;top:432.1px;width:21.4px;height:19.7px;background:#e2e2e2"></i>
<i class="mz" style="left:169.1px;top:432.1px;width:21.9px;height:19.7px;background:#f6f6f6"></i>
<i class="mz" style="left:191.0px;top:432.1px;width:20.9px;height:19.7px;background:#fafafa"></i>
<i class="mz" style="left:211.9px;top:432.1px;width:21.9px;height:19.7px;background:#f6f6f6"></i>
<i class="mz" style="left:233.8px;top:432.1px;width:21.2px;height:19.7px;background:#f9f9f9"></i>
<i class="mz" style="left:100.3px;top:451.8px;width:4.6px;height:21.1px;background:#f8f8f8"></i>
<i class="mz" style="left:104.9px;top:451.8px;width:22.3px;height:21.1px;background:#ededed"></i>
<i class="mz" style="left:127.2px;top:451.8px;width:20.5px;height:21.1px;background:#e4e4e4"></i>
<i class="mz" style="left:147.7px;top:451.8px;width:21.4px;height:21.1px;background:#e6e6e6"></i>
<i class="mz" style="left:169.1px;top:451.8px;width:21.9px;height:21.1px;background:#f4f4f4"></i>
<i class="mz" style="left:191.0px;top:451.8px;width:20.9px;height:21.1px;background:#f6f6f6"></i>
<i class="mz" style="left:211.9px;top:451.8px;width:21.9px;height:21.1px;background:#f6f6f6"></i>
<i class="mz" style="left:233.8px;top:451.8px;width:21.2px;height:21.1px;background:#fdfdfd"></i>
<i class="mz" style="left:100.3px;top:472.9px;width:161.7px;height:2.1px;background:#fcfcfc"></i>
<i class="mz" style="left:101.0px;top:519.2px;width:3.9px;height:17.6px;background:#f0f0f0"></i>
<i class="mz" style="left:104.9px;top:519.2px;width:22.3px;height:17.6px;background:#d4d4d4"></i>
<i class="mz" style="left:127.2px;top:519.2px;width:20.5px;height:17.6px;background:#d9d9d9"></i>
<i class="mz" style="left:147.7px;top:519.2px;width:21.4px;height:17.6px;background:#d9d9d9"></i>
<i class="mz" style="left:169.1px;top:519.2px;width:21.9px;height:17.6px;background:#e4e4e4"></i>
<i class="mz" style="left:191.0px;top:519.2px;width:20.9px;height:17.6px;background:#f4f4f4"></i>
<i class="mz" style="left:211.9px;top:519.2px;width:21.9px;height:17.6px;background:#e6e6e6"></i>
<i class="mz" style="left:233.8px;top:519.2px;width:21.2px;height:17.6px;background:#f0f0f0"></i>
<i class="mz" style="left:101.0px;top:536.8px;width:3.9px;height:24.7px;background:#f6f6f6"></i>
<i class="mz" style="left:104.9px;top:536.8px;width:22.3px;height:24.7px;background:#f1f1f1"></i>
<i class="mz" style="left:127.2px;top:536.8px;width:20.5px;height:24.7px;background:#eeeeee"></i>
<i class="mz" style="left:147.7px;top:536.8px;width:21.4px;height:24.7px;background:#f0f0f0"></i>
<i class="mz" style="left:169.1px;top:536.8px;width:21.9px;height:24.7px;background:#f2f2f2"></i>
<i class="mz" style="left:191.0px;top:536.8px;width:20.9px;height:24.7px;background:#f4f4f4"></i>
<i class="mz" style="left:211.9px;top:536.8px;width:21.9px;height:24.7px;background:#f6f6f6"></i>
<i class="mz" style="left:233.8px;top:536.8px;width:21.2px;height:24.7px;background:#fafafa"></i>
<i class="mz" style="left:255.0px;top:536.8px;width:4.0px;height:24.7px;background:#fdfdfd"></i>
<i class="mz" style="left:100.3px;top:612.1px;width:4.6px;height:10.9px;background:#efefef"></i>
<i class="mz" style="left:104.9px;top:612.1px;width:22.3px;height:10.9px;background:#c8c8c8"></i>
<i class="mz" style="left:127.2px;top:612.1px;width:20.5px;height:10.9px;background:#cdcdcd"></i>
<i class="mz" style="left:147.7px;top:612.1px;width:21.4px;height:10.9px;background:#c8c8c8"></i>
<i class="mz" style="left:169.1px;top:612.1px;width:21.9px;height:10.9px;background:#d4d4d4"></i>
<i class="mz" style="left:191.0px;top:612.1px;width:20.9px;height:10.9px;background:#e4e4e4"></i>
<i class="mz" style="left:211.9px;top:612.1px;width:21.9px;height:10.9px;background:#c8c8c8"></i>
<i class="mz" style="left:233.8px;top:612.1px;width:21.2px;height:10.9px;background:#dcdcdc"></i>
<i class="mz" style="left:100.3px;top:623.0px;width:4.6px;height:20.8px;background:#f4f4f4"></i>
<i class="mz" style="left:104.9px;top:623.0px;width:22.3px;height:20.8px;background:#d4d4d4"></i>
<i class="mz" style="left:127.2px;top:623.0px;width:20.5px;height:20.8px;background:#cfcfcf"></i>
<i class="mz" style="left:147.7px;top:623.0px;width:21.4px;height:20.8px;background:#d6d6d6"></i>
<i class="mz" style="left:169.1px;top:623.0px;width:21.9px;height:20.8px;background:#f6f6f6"></i>
<i class="mz" style="left:191.0px;top:623.0px;width:20.9px;height:20.8px;background:#f7f7f7"></i>
<i class="mz" style="left:211.9px;top:623.0px;width:21.9px;height:20.8px;background:#f8f8f8"></i>
<i class="mz" style="left:233.8px;top:623.0px;width:21.2px;height:20.8px;background:#fdfdfd"></i>
<i class="mz" style="left:100.3px;top:643.8px;width:4.6px;height:9.4px;background:#fdfdfd"></i>
<i class="mz" style="left:104.9px;top:643.8px;width:22.3px;height:9.4px;background:#fbfbfb"></i>
<i class="mz" style="left:127.2px;top:643.8px;width:20.5px;height:9.4px;background:#fcfcfc"></i>
<i class="mz" style="left:147.7px;top:643.8px;width:21.4px;height:9.4px;background:#fbfbfb"></i>
<i class="mz" style="left:169.1px;top:643.8px;width:21.9px;height:9.4px;background:#fcfcfc"></i>
<i class="mz" style="left:191.0px;top:643.8px;width:20.9px;height:9.4px;background:#fcfcfc"></i>
<i class="mz" style="left:211.9px;top:643.8px;width:21.9px;height:9.4px;background:#fcfcfc"></i>
<i class="mz" style="left:233.8px;top:643.8px;width:21.2px;height:9.4px;background:#fefefe"></i>
<i class="mz" style="left:101.0px;top:704.0px;width:3.9px;height:3.8px;background:#f8f8f8"></i>
<i class="mz" style="left:104.9px;top:704.0px;width:22.3px;height:3.8px;background:#f4f4f4"></i>
<i class="mz" style="left:127.2px;top:704.0px;width:20.5px;height:3.8px;background:#f6f6f6"></i>
<i class="mz" style="left:147.7px;top:704.0px;width:21.4px;height:3.8px;background:#f4f4f4"></i>
<i class="mz" style="left:169.1px;top:704.0px;width:21.9px;height:3.8px;background:#f8f8f8"></i>
<i class="mz" style="left:191.0px;top:704.0px;width:20.9px;height:3.8px;background:#fafafa"></i>
<i class="mz" style="left:211.9px;top:704.0px;width:21.9px;height:3.8px;background:#f0f0f0"></i>
<i class="mz" style="left:233.8px;top:704.0px;width:19.2px;height:3.8px;background:#f6f6f6"></i>
<i class="mz" style="left:101.0px;top:707.8px;width:3.9px;height:21.3px;background:#f8f8f8"></i>
<i class="mz" style="left:104.9px;top:707.8px;width:22.3px;height:21.3px;background:#d8d8d8"></i>
<i class="mz" style="left:127.2px;top:707.8px;width:20.5px;height:21.3px;background:#c8c8c8"></i>
<i class="mz" style="left:147.7px;top:707.8px;width:21.4px;height:21.3px;background:#cfcfcf"></i>
<i class="mz" style="left:169.1px;top:707.8px;width:21.9px;height:21.3px;background:#f4f4f4"></i>
<i class="mz" style="left:101.0px;top:729.1px;width:3.9px;height:17.7px;background:#f8f8f8"></i>
<i class="mz" style="left:104.9px;top:729.1px;width:22.3px;height:17.7px;background:#eeeeee"></i>
<i class="mz" style="left:127.2px;top:729.1px;width:20.5px;height:17.7px;background:#e6e6e6"></i>
<i class="mz" style="left:147.7px;top:729.1px;width:21.4px;height:17.7px;background:#e8e8e8"></i>
<i class="mz" style="left:169.1px;top:729.1px;width:21.9px;height:17.7px;background:#e8e8e8"></i>
<i class="mz" style="left:191.0px;top:729.1px;width:20.9px;height:17.7px;background:#e6e6e6"></i>
<i class="mz" style="left:211.9px;top:729.1px;width:21.9px;height:17.7px;background:#eaeaea"></i>
<i class="mz" style="left:233.8px;top:729.1px;width:19.2px;height:17.7px;background:#fafafa"></i>
<div style="position:absolute;left:641.5px;top:775.5px;width:303px;height:5.500px;border-radius:3px;background:#dcdcdc"></div>
</div>
<div style="position:absolute;left:869px;top:1110px;font-size:12.500px;line-height:16px;color:#2a2b36;white-space:nowrap;letter-spacing:0.1px" id="pgt">1 - 50 of 500</div>
<div class="pg" style="left:956.5px"><svg style="position:absolute;left:8.500px;top:7px;width:6px;height:10px" viewBox="0 0 6 10"><path d="M5 0.800L1 5L5 9.200" fill="none" stroke="#55565c" stroke-width="1.200" stroke-linecap="round" stroke-linejoin="round"/></svg></div>
<div class="pg" style="left:988px;background:#fff;border:1px solid #009995;line-height:22px;color:#121212;-webkit-text-stroke:0.150px #121212">1</div>
<div class="pg" style="left:1019.3px">2</div>
<div class="pg" style="left:1050.8px">3</div>
<div class="pg" style="left:1082.3px">4</div>
<div class="pg" style="left:1113.8px">5</div>
<div class="pg" style="left:1145.3px">6</div>
<div class="pg" style="left:1177px"><svg style="position:absolute;left:9.500px;top:7px;width:6px;height:10px" viewBox="0 0 6 10"><path d="M1 0.800L5 5L1 9.200" fill="none" stroke="#55565c" stroke-width="1.200" stroke-linecap="round" stroke-linejoin="round"/></svg></div>
<div style="position:absolute;left:1216.500px;top:1106px;width:84px;height:24px;border-radius:4px;background:#f7f7f7"></div>
<div style="position:absolute;left:1225px;top:1108px;font-size:14px;line-height:20px;color:#2a2b36;white-space:nowrap;letter-spacing:0.1px" id="pp">10/page</div>
<svg style="position:absolute;left:1283px;top:1115.500px;width:10px;height:6px" viewBox="0 0 10 6"><path d="M0.700 0.700L5 5L9.300 0.700" fill="none" stroke="#55565c" stroke-width="1.200" stroke-linecap="round" stroke-linejoin="round"/></svg>
<div id="tip"></div>
<div style="position:absolute;left:928px;top:72.500px;width:8px;height:8px;background:#009995;transform:rotate(45deg)"></div>
<div style="position:absolute;left:573.300px;top:86px;font-size:18.600px;line-height:24px;color:#fff;white-space:nowrap;-webkit-text-stroke:0.450px #fff;letter-spacing:1.030px" id="tipt">Try to use bulk edit!</div>
<div style="position:absolute;left:573px;top:120px;width:345px;font-size:16px;line-height:23.500px;color:#e8f6f6;letter-spacing:0.170px" id="tipb">To make your open product management more efficient</div>
<div style="position:absolute;left:730.500px;top:182px;width:106px;height:36.500px;border:1px solid #d9f0ef;border-radius:4px;font-size:14px;line-height:34.500px;text-align:center;color:#fff;-webkit-text-stroke:0.300px #fff;white-space:nowrap;letter-spacing:0.120px" id="lm">Learn more</div>
<div style="position:absolute;left:847.500px;top:182px;width:68.500px;height:36.500px;background:#fff;border-radius:4px;font-size:14px;line-height:36.500px;text-align:center;color:#009995;-webkit-text-stroke:0.300px #009995;white-space:nowrap;letter-spacing:0.100px" id="gi">Got it</div>
<svg style="position:absolute;left:930px;top:36px;width:140px;height:100px" viewBox="0 0 140 100"><rect x="8.180" y="8.430" width="121.350" height="81.700" rx="1.200" fill="none" stroke="#fc0f5c" stroke-width="7.350"/></svg>
</body>
</html>
